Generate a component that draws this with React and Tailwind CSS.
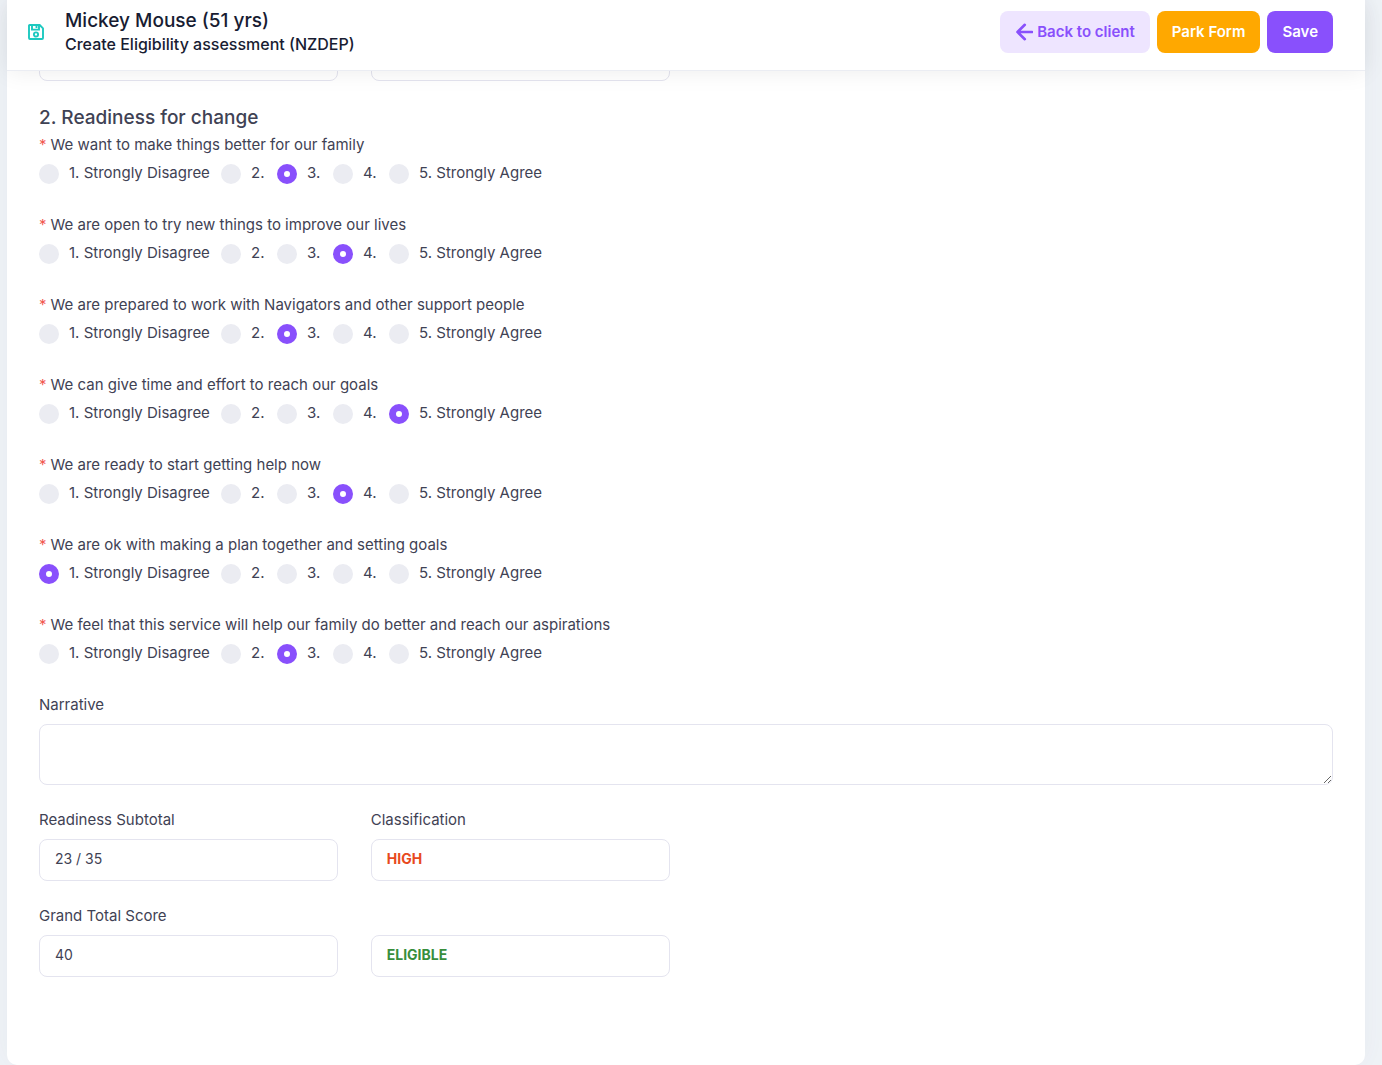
import { useState } from "react";

const questions = [
  { id: "better", text: "We want to make things better for our family", value: 3 },
  { id: "open", text: "We are open to try new things to improve our lives", value: 4 },
  { id: "navigators", text: "We are prepared to work with Navigators and other support people", value: 3 },
  { id: "effort", text: "We can give time and effort to reach our goals", value: 5 },
  { id: "ready", text: "We are ready to start getting help now", value: 4 },
  { id: "plan", text: "We are ok with making a plan together and setting goals", value: 1 },
  { id: "service", text: "We feel that this service will help our family do better and reach our aspirations", value: 3 },
];

const options = [
  { value: 1, label: "1. Strongly Disagree", width: "w-[138px]" },
  { value: 2, label: "2.", width: "w-3" },
  { value: 3, label: "3.", width: "w-3" },
  { value: 4, label: "4.", width: "w-3" },
  { value: 5, label: "5. Strongly Agree", width: "" },
];

const inputClass =
  "block h-[42px] w-full rounded-lg border border-[#e4e4ef] bg-white px-[15px] pb-1 text-sm outline-none";

function SaveIcon() {
  return (
    <svg width="18" height="18" viewBox="0 0 18 18" fill="none" stroke="#1dc9c0" strokeWidth="1.9">
      <path d="M2.600 2H12.700L16 5.300V15a1 1 0 0 1-1 1H3a1 1 0 0 1-1-1V2.600a.6.6 0 0 1 .6-.6z" strokeLinejoin="round" />
      <path d="M5 2v4.600h7V2" />
      <path d="M9.500 2v3" />
      <circle cx="9" cy="11.500" r="2.100" />
    </svg>
  );
}

function ArrowIcon() {
  return (
    <svg width="18" height="18" viewBox="0 0 18 18" fill="none" stroke="currentColor" strokeWidth="2.6">
      <path d="M9.800 1.800 2.500 9l7.300 7.200M2.500 9H17" strokeLinecap="round" strokeLinejoin="round" />
    </svg>
  );
}

function Question({ question }) {
  const [value, setValue] = useState(question.value);
  return (
    <fieldset className="mb-[30px]">
      <legend className="mb-2 text-[15px] leading-[21px]">
        <span className="mr-1 text-[#f1584f]">*</span>
        {question.text}
      </legend>
      <div className="flex gap-[14px]">
        {options.map((option) => (
          <label key={option.value} className="flex h-[21px] items-center gap-[10px] text-[15px] whitespace-nowrap">
            <input
              type="radio"
              name={question.id}
              checked={value === option.value}
              onChange={() => setValue(option.value)}
              className="size-5 shrink-0 appearance-none rounded-full bg-[#ebecf2] checked:border-[7px] checked:border-[#8950fc] checked:bg-white"
            />
            <span className={option.width}>{option.label}</span>
          </label>
        ))}
      </div>
    </fieldset>
  );
}

function Field({ id, label, value, className = "" }) {
  return (
    <div>
      <label htmlFor={id} className="mb-[9px] block h-[21px] text-[15px] leading-[21px]">
        {label}
      </label>
      <input id={id} readOnly defaultValue={value} className={`${inputClass} ${className}`} />
    </div>
  );
}

export default function App() {
  return (
    <div className="min-h-screen bg-[#eff3f7] pr-[17px] pl-[7px] font-['Inter',sans-serif] text-[#3f4254]">
      <div className="min-h-screen rounded-b-[10px] bg-white shadow-[0_0_30px_rgba(82,63,105,0.05)]">
        {/* Header */}
        <header className="sticky top-0 z-10 flex h-[71px] items-start justify-between border-b border-[#ebedf3] bg-white pr-8 pl-5 shadow-[0_0_24px_rgba(0,0,0,0.08)]">
          <div className="flex items-center gap-5 pt-[9px]">
            <SaveIcon />
            <div className="text-[#181c32]">
              <h1 className="text-[19px] leading-6 font-medium">Mickey Mouse (51 yrs)</h1>
              <p className="text-base leading-[22px] font-medium">Create Eligibility assessment (NZDEP)</p>
            </div>
          </div>
          <div className="flex gap-[7px] pt-[11px] text-[15px] font-semibold">
            <a href="#client" className="flex h-[42px] items-center gap-1 rounded-lg bg-[#eee5ff] px-[15px] text-[#8950fc]">
              <ArrowIcon />
              Back to client
            </a>
            <button type="button" className="h-[42px] rounded-lg bg-[#ffa800] px-[15px] text-white">
              Park Form
            </button>
            <button type="submit" form="assessment" className="h-[42px] rounded-lg bg-[#8950fc] px-[15px] text-white">
              Save
            </button>
          </div>
        </header>

        <form id="assessment" onSubmit={(e) => e.preventDefault()} className="-mt-8 px-8 pb-12">
          <div className="grid grid-cols-4 gap-x-[33px]">
            <input aria-label="Subtotal" readOnly className={inputClass} />
            <input aria-label="Section classification" readOnly className={inputClass} />
          </div>

          {/* Readiness for change */}
          <h2 className="mt-6 mb-1 text-[19px] leading-[25px] font-medium">2. Readiness for change</h2>
          {questions.map((question) => (
            <Question key={question.id} question={question} />
          ))}

          <label htmlFor="narrative" className="mb-[9px] block text-[15px] leading-[21px]">
            Narrative
          </label>
          <textarea
            id="narrative"
            className="block h-[61px] w-full resize-y rounded-lg border border-[#e4e4ef] px-[15px] py-2 text-sm outline-none"
          />

          {/* Totals */}
          <div className="mt-6 grid grid-cols-4 gap-x-[33px] gap-y-6">
            <Field id="subtotal" label="Readiness Subtotal" value="23 / 35" />
            <Field id="classification" label="Classification" value="HIGH" className="font-bold text-[#e8491d]" />
            <div className="col-start-1">
              <Field id="total" label="Grand Total Score" value="40" />
            </div>
            <input
              aria-label="Eligibility"
              readOnly
              defaultValue="ELIGIBLE"
              className={`${inputClass} self-end font-bold text-[#388e3c]`}
            />
          </div>
        </form>
      </div>
    </div>
  );
}
